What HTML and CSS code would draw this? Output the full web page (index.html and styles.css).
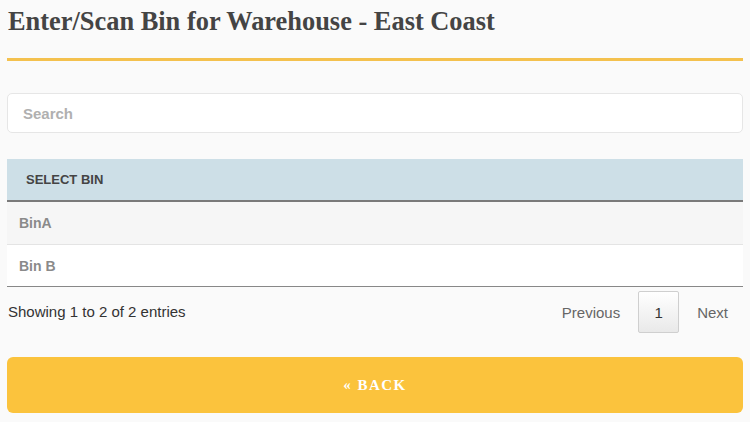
FILE: index.html
```html
<!DOCTYPE html>
<html>
<head>
<meta charset="utf-8">
<link rel="stylesheet" href="styles.css">
</head>
<body>
<div class="page">
  <h1 class="title">Enter/Scan Bin for Warehouse - East Coast</h1>
  <div class="rule"></div>
  <input class="search" type="text" placeholder="Search">
  <table class="bins">
    <thead><tr><th>SELECT BIN</th></tr></thead>
    <tbody>
      <tr class="odd"><td>BinA</td></tr>
      <tr class="even"><td>Bin B</td></tr>
    </tbody>
  </table>
  <div class="footer">
    <div class="info">Showing 1 to 2 of 2 entries</div>
    <div class="pager">
      <span class="plink">Previous</span>
      <span class="pcur">1</span>
      <span class="plink">Next</span>
    </div>
  </div>
  <button class="back">« BACK</button>
</div>
</body>
</html>
```
FILE: styles.css
```css
html, body { margin: 0; padding: 0; background: #fafafa; }
.page { padding: 0 7px 0 7px; font-family: "Liberation Sans", Arial, sans-serif; }
.title {
  margin: 0;
  padding-top: 7px;
  height: 28px;
  line-height: 28px;
  font-family: "Liberation Serif", "Times New Roman", serif;
  font-weight: bold;
  font-size: 26.4px;
  color: #444;
  padding-left: 1px;
}
.rule { margin-top: 23px; height: 3px; background: #f4c14e; }
.search {
  display: block;
  box-sizing: border-box;
  margin-top: 32px;
  width: 100%;
  height: 40px;
  border: 1px solid #e6e6e6;
  border-radius: 5px;
  background: #fff;
  padding: 0 15px;
  font-family: "Liberation Sans", Arial, sans-serif;
  font-size: 15px;
  font-weight: bold;
  color: #333;
  outline: none;
}
.search::placeholder { color: #b0b0b0; }
.bins {
  margin-top: 26px;
  width: 100%;
  border-collapse: collapse;
}
.bins th {
  background: #cddfe7;
  text-align: left;
  height: 41px;
  padding: 0 0 0 19px;
  font-size: 13px;
  font-weight: bold;
  color: #444;
  border-bottom: 2px solid #7a7a7a;
}
.bins td {
  height: 42px;
  padding: 0 0 0 12px;
  font-size: 14px;
  font-weight: bold;
  color: #8a8a8a;
  border-top: 1px solid #e4e4e4;
}
.bins tr.odd td { background: #f6f6f6; border-top: none; }
.bins tr.even td { background: #fff; border-bottom: 1px solid #888; height: 41px; }
.footer {
  display: flex;
  justify-content: space-between;
  align-items: center;
  margin-top: 4px;
  height: 42px;
}
.info { font-size: 15px; color: #333; padding-left: 1px; padding-bottom: 2px; }
.pager { display: flex; align-items: center; font-size: 15px; color: #666; }
.plink { padding: 0 18px; }
.pcur {
  box-sizing: border-box;
  width: 41px;
  height: 42px;
  display: flex;
  align-items: center;
  justify-content: center;
  border: 1px solid #cfcfcf;
  border-radius: 2px;
  background: linear-gradient(#ffffff, #e9e9e9);
  color: #333;
}
.plink:last-child { padding-right: 15px; padding-left: 18px; }
.back {
  display: block;
  margin-top: 24px;
  width: 100%;
  height: 56px;
  border: none;
  border-radius: 6px;
  background: #fbc33d;
  color: #fff;
  font-family: "Liberation Serif", "Times New Roman", serif;
  font-weight: bold;
  font-size: 15px;
  letter-spacing: 1.5px;
}
```
